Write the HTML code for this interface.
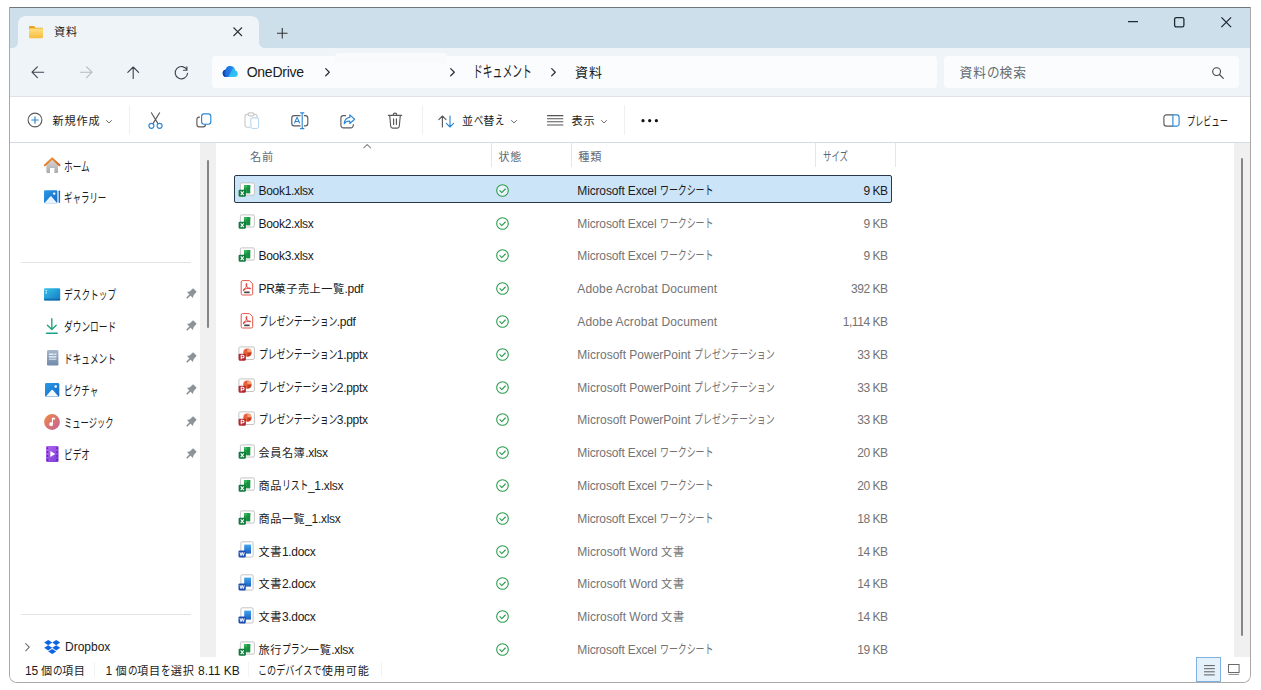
<!DOCTYPE html>
<html lang="ja">
<head>
<meta charset="utf-8">
<title>資料</title>
<style>
*{box-sizing:border-box;margin:0;padding:0}
html,body{width:1261px;height:690px;overflow:hidden;background:#fff}
body{font-family:"Liberation Sans","Noto Sans CJK JP",sans-serif;font-size:12px;color:#1b1b1b;position:relative}
#win{position:absolute;left:9px;top:7px;width:1242px;height:676px;border:1px solid #a9a9a9;border-top-color:#6e7780;border-radius:1px 1px 8px 8px;overflow:hidden;background:#fff}
#win>*{position:absolute}
.b{position:absolute}
.t{position:absolute;white-space:nowrap}
.i{position:absolute;overflow:visible}
.k{display:inline-block;white-space:nowrap;vertical-align:baseline}
.k>span{display:inline-block;transform-origin:0 72%}
#titlebar{left:0;top:0;width:1240px;height:40px;background:#cedfec}
#tab{position:absolute;left:8px;top:8px;width:241px;height:32px;background:#eff4f9;border-radius:8px 8px 0 0}
#tab:before,#tab:after{content:"";position:absolute;bottom:0;width:5px;height:5px}
#tab:before{left:-5px;background:radial-gradient(circle at 0 0,transparent 4.5px,#eff4f9 5px)}
#tab:after{right:-5px;background:radial-gradient(circle at 100% 0,transparent 4.5px,#eff4f9 5px)}
#addr{left:0;top:40px;width:1240px;height:49px;background:#eff4f9;border-bottom:1px solid #dfe3e8}
.field{position:absolute;top:8px;height:32px;background:#fafcfd;border-radius:4px}
#toolbar{left:0;top:89px;width:1240px;height:46px;background:#fff;border-bottom:1px solid #d0dce7}
#side{left:0;top:135px;width:190px;height:514px;background:#fff}
#split{left:190px;top:135px;width:16px;height:514px;background:#f0f0f0}
#split i{position:absolute;left:7px;top:17px;width:2px;height:168px;background:#868686;border-radius:1px}
#vscroll{left:1224px;top:135px;width:16px;height:514px;background:#f0f0f0}
#vscroll i{position:absolute;left:7px;top:15px;width:2px;height:478px;background:#868686;border-radius:1px}
#status{left:0;top:649px;width:1240px;height:26px;background:#fff}
.sel{left:224px;top:167px;width:658px;height:28px;background:#cce4f7;border:1px solid #27394a;border-radius:2px}
.vsep{width:1px;background:#e6e6e6}
.hsep{height:1px;background:#e4e4e4}

</style>
</head>
<body>
<div id="win">
<div id="titlebar"><div id="tab"></div></div>
<div id="addr"><div class="field" style="left:202px;width:724.5px"></div><div class="field" style="left:934px;width:295px"></div></div>
<div id="toolbar"></div>
<div id="side"></div>
<div id="split"><i></i></div>
<div id="vscroll"><i></i></div>
<svg class="i" style="left:18.00px;top:17.00px;" width="16" height="14" viewBox="0 0 16 14">
<defs><linearGradient id="fg" x1="0" y1="0" x2="0" y2="1"><stop offset="0" stop-color="#ffe083"/><stop offset="1" stop-color="#f6bd3c"/></linearGradient></defs>
<path d="M1 2.2C1 1.5 1.5 1 2.2 1H6l1.6 1.8H13.8c.7 0 1.2.5 1.2 1.2V5H1z" fill="#e9a320"/>
<rect x="1" y="3.6" width="14" height="9.6" rx="1.1" fill="url(#fg)"/>
</svg>
<div class="t" style="top:14.30px;font-size:12px;line-height:20px;left:44.00px;color:#1b1b1b;"><span class="j" style="font-size:11.16px;letter-spacing:0.84px">資料</span></div>
<svg class="i" style="left:222.50px;top:19.30px;" width="9.5" height="9.5" viewBox="0 0 9.5 9.5"><path d="M.5.5l8.5 8.5M9 .5L.5 9" stroke="#333" stroke-width="1.1" fill="none"/></svg>
<svg class="i" style="left:266.50px;top:19.50px;" width="10.5" height="10.5" viewBox="0 0 10.5 10.5"><path d="M5.25 0v10.5M0 5.25h10.5" stroke="#333" stroke-width="1.1" fill="none"/></svg>
<svg class="i" style="left:1118.00px;top:13.20px;" width="10" height="1.3" viewBox="0 0 10 1.3"><rect width="10" height="1.250" fill="#1f2a33"/></svg>
<svg class="i" style="left:1164.00px;top:9.00px;" width="10.5" height="10.5" viewBox="0 0 10.5 10.5"><rect x=".6" y=".6" width="9.3" height="9.3" rx="1.6" stroke="#1f2a33" stroke-width="1.300" fill="none"/></svg>
<svg class="i" style="left:1211.00px;top:9.00px;" width="10.5" height="10.5" viewBox="0 0 10.5 10.5"><path d="M.4.4l9.7 9.7M10.1.4L.4 10.1" stroke="#1f2a33" stroke-width="1.300" fill="none"/></svg>
<svg class="i" style="left:21.00px;top:57.50px;" width="13" height="12.5" viewBox="0 0 13 12.5"><path d="M12.6 6.2H1.2M6.4 .8L1 6.2l5.4 5.4" stroke="#3f4650" stroke-width="1.15" fill="none" stroke-linecap="round" stroke-linejoin="round"/></svg>
<svg class="i" style="left:69.50px;top:57.50px;" width="13" height="12.5" viewBox="0 0 13 12.5"><path d="M.4 6.2H11.8M6.6 .8L12 6.2 6.6 11.6" stroke="#b4bac1" stroke-width="1.15" fill="none" stroke-linecap="round" stroke-linejoin="round"/></svg>
<svg class="i" style="left:116.80px;top:57.80px;" width="12.5" height="13" viewBox="0 0 12.5 13"><path d="M6.2 12.4V1.2M.8 6.4L6.2 1l5.4 5.4" stroke="#3f4650" stroke-width="1.15" fill="none" stroke-linecap="round" stroke-linejoin="round"/></svg>
<svg class="i" style="left:165.00px;top:57.50px;" width="13.5" height="13.5" viewBox="0 0 13.5 13.5"><path d="M12.58 7.240A6.200 6.200 0 1 1 12.020 4.080M11.900 .800V4.200H8.500" stroke="#3f4650" stroke-width="1.150" fill="none" stroke-linecap="round" stroke-linejoin="round"/></svg>
<svg class="i" style="left:212.40px;top:57.80px;" width="16.4" height="11.2" viewBox="0 0 16.4 11.2">
<defs><linearGradient id="cg1" x1="0" y1="0" x2="1" y2="0"><stop offset="0" stop-color="#1757cf"/><stop offset="1" stop-color="#2a8ff0"/></linearGradient>
<linearGradient id="cg2" x1="0" y1="0" x2="1" y2="1"><stop offset="0" stop-color="#249cf0"/><stop offset="1" stop-color="#36ccf8"/></linearGradient>
<clipPath id="cc"><path d="M4.200 11.100A3.900 3.900 0 0 1 3.800 3.400 4.900 4.900 0 0 1 13.300 4.600 3.300 3.300 0 0 1 12.900 11.100z"/></clipPath></defs>
<g clip-path="url(#cc)"><rect width="16.400" height="11.200" fill="url(#cg2)"/>
<path d="M-1 -1H12.600L5.800 12H-1z" fill="url(#cg1)"/>
<path d="M4.200 11.100A3.900 3.900 0 0 1 3.800 3.400 6 6 0 0 0 4.200 11.100z" fill="#103ea4"/></g>
</svg>
<div class="t" style="top:53.70px;font-size:14px;line-height:20px;left:236.70px;color:#1b1b1b;letter-spacing:-0.25px;">OneDrive</div>
<svg class="i" style="left:314.50px;top:59.80px;" width="5" height="8.4" viewBox="0 0 5 8.4"><path d="M.7.6l3.6 3.6L.7 7.8" stroke="#30363d" stroke-width="1.3" fill="none" stroke-linecap="round" stroke-linejoin="round"/></svg>
<svg class="i" style="left:439.50px;top:59.80px;" width="5" height="8.4" viewBox="0 0 5 8.4"><path d="M.7.6l3.6 3.6L.7 7.8" stroke="#30363d" stroke-width="1.3" fill="none" stroke-linecap="round" stroke-linejoin="round"/></svg>
<div class="t" style="top:53.70px;font-size:14px;line-height:20px;left:462.70px;color:#1b1b1b;"><span class="k" style="width:58.80px"><span style="transform:scale(0.700,1.15)">ドキュメント</span></span></div>
<svg class="i" style="left:540.50px;top:59.80px;" width="5" height="8.4" viewBox="0 0 5 8.4"><path d="M.7.6l3.6 3.6L.7 7.8" stroke="#30363d" stroke-width="1.3" fill="none" stroke-linecap="round" stroke-linejoin="round"/></svg>
<div class="t" style="top:53.70px;font-size:14px;line-height:20px;left:565.00px;color:#1b1b1b;"><span class="j" style="font-size:13.02px;letter-spacing:0.98px">資料</span></div>
<div class="b" style="left:325px;top:45px;width:112px;height:10px;background:#f8fafc;border-radius:4px 4px 0 0"></div>
<div class="t" style="top:54.60px;font-size:13.7px;line-height:20px;left:949.60px;color:#666b70;"><span class="j" style="font-size:12.74px;letter-spacing:0.96px">資料</span><span class="k" style="width:12.60px"><span style="transform:scale(0.920,1.00)">の</span></span><span class="j" style="font-size:12.74px;letter-spacing:0.96px">検索</span></div>
<svg class="i" style="left:1202.00px;top:58.50px;" width="12" height="12" viewBox="0 0 12 12"><circle cx="4.6" cy="4.6" r="3.9" stroke="#444" stroke-width="1.1" fill="none"/><path d="M7.5 7.5l3.8 3.8" stroke="#444" stroke-width="1.1" stroke-linecap="round"/></svg>
<svg class="i" style="left:17.45px;top:104.20px;" width="16" height="16" viewBox="0 0 16 16"><circle cx="8" cy="8" r="6.900" stroke="#5a5a5a" stroke-width="1.100" fill="none"/><path d="M8 4.800v6.400M4.800 8h6.400" stroke="#2d87d3" stroke-width="1.200" stroke-linecap="round"/></svg>
<div class="t" style="top:103.40px;font-size:12px;line-height:20px;left:42.60px;color:#1b1b1b;"><span class="j" style="font-size:11.16px;letter-spacing:0.84px">新規作成</span></div>
<svg class="i" style="left:96.00px;top:111.50px;" width="6" height="3.4" viewBox="0 0 6 3.4"><path d="M.5.500l2.500 2.400L5.500.500" stroke="#6a6a6a" stroke-width="1" fill="none" stroke-linecap="round" stroke-linejoin="round"/></svg>
<div class="b vsep" style="left:119px;top:97px;height:30px;background:#f0f0f0"></div>
<svg class="i" style="left:138.00px;top:104.00px;" width="15" height="17.5" viewBox="0 0 15 17.5">
<path d="M3.4 .8L10 11.6M11.6 .8L5 11.6" stroke="#5a5a5a" stroke-width="1.15" fill="none" stroke-linecap="round"/>
<circle cx="3.4" cy="13.8" r="2.5" stroke="#2d87d3" stroke-width="1.15" fill="none"/>
<circle cx="11.6" cy="13.8" r="2.5" stroke="#2d87d3" stroke-width="1.15" fill="none"/>
</svg>
<svg class="i" style="left:185.50px;top:105.00px;" width="16" height="15" viewBox="0 0 16 15">
<path d="M3.9 4.1H3.2A2.3 2.3 0 0 0 .9 6.4v5.2a2.3 2.3 0 0 0 2.3 2.3h4a2.3 2.3 0 0 0 2.3-2.3v-.6" stroke="#5a5a5a" stroke-width="1.15" fill="none"/>
<rect x="5.6" y=".9" width="9.2" height="10.3" rx="2.4" stroke="#2d87d3" stroke-width="1.15" fill="none"/>
</svg>
<svg class="i" style="left:233.50px;top:104.00px;" width="16" height="17.5" viewBox="0 0 16 17.5">
<path d="M6.2 15.2H3A2 2 0 0 1 1 13.2V4.4a2 2 0 0 1 2-2h1.2M9.8 2.4H11a2 2 0 0 1 2 2v1.4" stroke="#c9c9c9" stroke-width="1.15" fill="none"/>
<rect x="4.2" y=".8" width="5.6" height="3" rx="1.3" stroke="#c9c9c9" stroke-width="1.15" fill="none"/>
<rect x="6.8" y="5.9" width="7.8" height="10.6" rx="1.9" stroke="#bdd9f0" stroke-width="1.15" fill="none"/>
</svg>
<svg class="i" style="left:280.50px;top:104.00px;" width="18" height="17.5" viewBox="0 0 18 17.5">
<path d="M9.500 3.600H3.200A2.400 2.400 0 0 0 .800 6v5.400a2.400 2.400 0 0 0 2.400 2.400H9.500M12.900 3.600h1.500A2.400 2.400 0 0 1 16.800 6v5.400a2.400 2.400 0 0 1-2.400 2.400H12.900" stroke="#5a5a5a" stroke-width="1.150" fill="none"/>
<path d="M3.400 11.400L5.800 5.600h.5l2.400 5.800M4.300 9.500h3.500" stroke="#2d87d3" stroke-width="1.150" fill="none" stroke-linejoin="round"/>
<path d="M11.200 1v15.400M9.500 .800h3.400M9.500 16.600h3.400" stroke="#2d87d3" stroke-width="1.150" fill="none" stroke-linecap="round"/>
</svg>
<svg class="i" style="left:329.50px;top:105.50px;" width="16.5" height="15" viewBox="0 0 16.5 15">
<path d="M5.600 1.600H3.400A2.500 2.500 0 0 0 .900 4.100v7.200a2.500 2.500 0 0 0 2.500 2.500h7.400a2.500 2.500 0 0 0 2.500-2.500v-.8" stroke="#5a5a5a" stroke-width="1.150" fill="none" stroke-linecap="round"/>
<path d="M9.800 .900l4.800 4.300-4.800 4.300V7.100C7.300 6.900 5.500 7.800 4.200 9.800 4.500 6.100 6.500 3.800 9.800 3.400z" stroke="#2d87d3" stroke-width="1.150" fill="none" stroke-linejoin="round"/>
</svg>
<svg class="i" style="left:376.80px;top:104.20px;" width="16" height="17" viewBox="0 0 16 17">
<path d="M1.300 3.300h13.400M6.200 3.100V2.900a1.800 1.800 0 0 1 3.600 0v.2M2.700 3.500l1 10.800a2 2 0 0 0 2 1.800h4.600a2 2 0 0 0 2-1.800l1-10.800M6.600 6.800v5.600M9.400 6.800v5.600" stroke="#5a5a5a" stroke-width="1.150" fill="none" stroke-linecap="round"/>
</svg>
<div class="b vsep" style="left:412px;top:97px;height:30px;background:#f0f0f0"></div>
<svg class="i" style="left:427.50px;top:106.50px;" width="17" height="13" viewBox="0 0 17 13">
<path d="M4.4 12V1.2M.8 4.6L4.4 1l3.6 3.6" stroke="#5a5a5a" stroke-width="1.15" fill="none" stroke-linecap="round" stroke-linejoin="round"/>
<path d="M12 1v10.8M8.4 8.4L12 12l3.6-3.6" stroke="#2d87d3" stroke-width="1.15" fill="none" stroke-linecap="round" stroke-linejoin="round"/>
</svg>
<div class="t" style="top:103.40px;font-size:12px;line-height:20px;left:452.00px;color:#1b1b1b;"><span class="j" style="font-size:11.16px;letter-spacing:0.84px">並</span><span class="k" style="width:9.36px"><span style="transform:scale(0.780,1.04)">べ</span></span><span class="j" style="font-size:11.16px;letter-spacing:0.84px">替</span><span class="k" style="width:9.36px"><span style="transform:scale(0.780,1.04)">え</span></span></div>
<svg class="i" style="left:501.40px;top:111.50px;" width="6" height="3.4" viewBox="0 0 6 3.4"><path d="M.5.500l2.500 2.400L5.500.500" stroke="#6a6a6a" stroke-width="1" fill="none" stroke-linecap="round" stroke-linejoin="round"/></svg>
<svg class="i" style="left:537.00px;top:107.40px;" width="16.5" height="10.5" viewBox="0 0 16.5 10.5"><path d="M0 .6h16.3M0 3.7h16.3M0 6.8h16.3M0 9.9h16.3" stroke="#555" stroke-width="1.05" fill="none"/></svg>
<div class="t" style="top:103.40px;font-size:12px;line-height:20px;left:561.60px;color:#1b1b1b;"><span class="j" style="font-size:11.16px;letter-spacing:0.84px">表示</span></div>
<svg class="i" style="left:591.30px;top:111.50px;" width="6" height="3.4" viewBox="0 0 6 3.4"><path d="M.5.500l2.500 2.400L5.500.500" stroke="#6a6a6a" stroke-width="1" fill="none" stroke-linecap="round" stroke-linejoin="round"/></svg>
<div class="b vsep" style="left:614px;top:97px;height:30px;background:#f0f0f0"></div>
<svg class="i" style="left:630.50px;top:111.00px;" width="17.5" height="3.4" viewBox="0 0 17.5 3.4"><circle cx="2" cy="1.7" r="1.600" fill="#111"/><circle cx="8.700" cy="1.7" r="1.600" fill="#111"/><circle cx="15.400" cy="1.7" r="1.600" fill="#111"/></svg>
<svg class="i" style="left:1152.50px;top:106.00px;" width="17" height="13" viewBox="0 0 17 13">
<path d="M9.9 .9H3.3A2.4 2.4 0 0 0 .9 3.3v6.4a2.4 2.4 0 0 0 2.4 2.4h6.6" stroke="#5a5a5a" stroke-width="1.15" fill="none"/>
<path d="M9.9 .9h3.8a2.4 2.4 0 0 1 2.4 2.4v6.4a2.4 2.4 0 0 1-2.4 2.4H9.9z" stroke="#2d87d3" stroke-width="1.15" fill="none"/>
</svg>
<div class="t" style="top:103.60px;font-size:12px;line-height:20px;left:1177.00px;color:#1b1b1b;"><span class="k" style="width:40.80px"><span style="transform:scale(0.680,1.04)">プレビュー</span></span></div>
<svg class="i" style="left:34.00px;top:149.00px;" width="16.5" height="17" viewBox="0 0 16.5 17">
<defs><linearGradient id="hg" x1="0" y1="0" x2="0" y2="1"><stop offset="0" stop-color="#d9d9d9"/><stop offset="1" stop-color="#a9a9a9"/></linearGradient>
<linearGradient id="ho" x1="0" y1="0" x2="1" y2="1"><stop offset="0" stop-color="#f59a3c"/><stop offset="1" stop-color="#d9601a"/></linearGradient></defs>
<path d="M2.4 7.6L8.2 2.4 14 7.6V15a1 1 0 0 1-1 1H10.4V11H6v5H3.4a1 1 0 0 1-1-1z" fill="url(#hg)"/>
<path d="M.9 8.2L8.2 1.4l7.3 6.8" stroke="url(#ho)" stroke-width="2" fill="none" stroke-linecap="round" stroke-linejoin="round"/>
</svg>
<div class="t" style="top:149.30px;font-size:12px;line-height:20px;left:54.00px;color:#1b1b1b;"><span class="k" style="width:25.92px"><span style="transform:scale(0.720,1.05)">ホーム</span></span></div>
<svg class="i" style="left:34.00px;top:181.50px;" width="16.5" height="13.5" viewBox="0 0 16.5 13.5">
<defs><linearGradient id="gg" x1="0" y1="0" x2="1" y2="1"><stop offset="0" stop-color="#2b9ae6"/><stop offset="1" stop-color="#1569c7"/></linearGradient></defs>
<rect x="0" y=".2" width="13.4" height="13" rx="1.2" fill="url(#gg)"/>
<path d="M.4 13.2L6.2 6.6a.9.9 0 0 1 1.3 0l5.7 6.6z" fill="#e8f3fc"/>
<circle cx="10.2" cy="3.6" r="1.2" fill="#fff"/>
<rect x="14.6" y=".6" width="1.5" height="12.4" rx=".7" fill="#1a6fc9"/>
</svg>
<div class="t" style="top:180.10px;font-size:12px;line-height:20px;left:54.00px;color:#1b1b1b;"><span class="k" style="width:42.30px"><span style="transform:scale(0.705,1.05)">ギャラリー</span></span></div>
<div class="b hsep" style="left:11px;top:254px;width:170px"></div>
<svg class="i" style="left:34.00px;top:279.50px;" width="16.5" height="12.8" viewBox="0 0 16.5 12.8">
<defs><linearGradient id="dg" x1="0" y1="0" x2="1" y2="1"><stop offset="0" stop-color="#35c3ea"/><stop offset="1" stop-color="#1378c2"/></linearGradient></defs>
<rect x="0" y=".2" width="16.2" height="12.3" rx="1.2" fill="url(#dg)"/>
<rect x="0" y="10.8" width="16.2" height="1.7" rx=".8" fill="#0f62a6" opacity=".75"/>
<rect x="1.6" y="1.9" width="1.3" height="1.3" fill="#e8f8ff"/><rect x="1.6" y="4.2" width="1.3" height="1.3" fill="#e8f8ff"/>
</svg>
<div class="t" style="top:276.60px;font-size:12px;line-height:20px;left:54.00px;color:#1b1b1b;"><span class="k" style="width:52.20px"><span style="transform:scale(0.725,1.05)">デスクトップ</span></span></div>
<svg class="i" style="left:175.50px;top:280.00px;" width="11" height="11" viewBox="0 0 11 11"><g transform="translate(4.700 6.200) rotate(45)"><path d="M-2.600-5.100a.9.9 0 0 1 .9-.9h3.400a.9.9 0 0 1 .9.9V-1.600L4.100 1.100H-4.100L-2.600-1.600z" fill="#8b949b"/><path d="M0 1V5" stroke="#8b949b" stroke-width="1.700" stroke-linecap="round"/></g></svg>
<svg class="i" style="left:36.30px;top:310.00px;" width="12" height="16.2" viewBox="0 0 12 16.2"><path d="M5.8 .8v10.6M1.400 7.200l4.400 4.400 4.400-4.400" stroke="#23a67c" stroke-width="1.4" fill="none" stroke-linecap="round" stroke-linejoin="round"/><path d="M.6 15.2h10.600" stroke="#1d9f86" stroke-width="1.5" stroke-linecap="round"/></svg>
<div class="t" style="top:308.60px;font-size:12px;line-height:20px;left:54.00px;color:#1b1b1b;"><span class="k" style="width:52.20px"><span style="transform:scale(0.725,1.05)">ダウンロード</span></span></div>
<svg class="i" style="left:175.50px;top:312.00px;" width="11" height="11" viewBox="0 0 11 11"><g transform="translate(4.700 6.200) rotate(45)"><path d="M-2.600-5.100a.9.9 0 0 1 .9-.9h3.400a.9.9 0 0 1 .9.9V-1.600L4.100 1.100H-4.100L-2.600-1.600z" fill="#8b949b"/><path d="M0 1V5" stroke="#8b949b" stroke-width="1.700" stroke-linecap="round"/></g></svg>
<svg class="i" style="left:36.50px;top:342.00px;" width="11.6" height="15.8" viewBox="0 0 11.6 15.8">
<defs><linearGradient id="og" x1="0" y1="0" x2="0" y2="1"><stop offset="0" stop-color="#a9bacd"/><stop offset="1" stop-color="#6f89a9"/></linearGradient></defs>
<rect x="0" y="0" width="11.4" height="15.600" rx="1.300" fill="url(#og)"/>
<rect x="2" y="3.600" width="4.600" height="1.300" fill="#f3f7fb"/><rect x="7.400" y="3.600" width="2" height="1.300" fill="#f3f7fb"/><rect x="2" y="6.200" width="7.400" height="1.300" fill="#f3f7fb"/><rect x="2" y="8.700" width="7.400" height="1" fill="#dfe8f1"/>
</svg>
<div class="t" style="top:340.60px;font-size:12px;line-height:20px;left:54.00px;color:#1b1b1b;"><span class="k" style="width:51.84px"><span style="transform:scale(0.720,1.05)">ドキュメント</span></span></div>
<svg class="i" style="left:175.50px;top:344.00px;" width="11" height="11" viewBox="0 0 11 11"><g transform="translate(4.700 6.200) rotate(45)"><path d="M-2.600-5.100a.9.9 0 0 1 .9-.9h3.400a.9.9 0 0 1 .9.9V-1.600L4.100 1.100H-4.100L-2.600-1.600z" fill="#8b949b"/><path d="M0 1V5" stroke="#8b949b" stroke-width="1.700" stroke-linecap="round"/></g></svg>
<svg class="i" style="left:35.00px;top:375.00px;" width="14.5" height="14" viewBox="0 0 14.5 14">
<rect x="0" y="0" width="14.300" height="13.800" rx="1.400" fill="url(#gg)"/>
<path d="M.8 13.400L6.500 7a.9.9 0 0 1 1.300 0l5.700 6.400z" fill="#f2f8fd"/>
<circle cx="10.700" cy="3.500" r="1.250" fill="#fff"/>
</svg>
<div class="t" style="top:372.60px;font-size:12px;line-height:20px;left:54.00px;color:#1b1b1b;"><span class="k" style="width:34.56px"><span style="transform:scale(0.720,1.05)">ピクチャ</span></span></div>
<svg class="i" style="left:175.50px;top:376.00px;" width="11" height="11" viewBox="0 0 11 11"><g transform="translate(4.700 6.200) rotate(45)"><path d="M-2.600-5.100a.9.9 0 0 1 .9-.9h3.400a.9.9 0 0 1 .9.9V-1.600L4.100 1.100H-4.100L-2.600-1.600z" fill="#8b949b"/><path d="M0 1V5" stroke="#8b949b" stroke-width="1.700" stroke-linecap="round"/></g></svg>
<svg class="i" style="left:34.00px;top:406.00px;" width="16" height="16" viewBox="0 0 16 16">
<defs><linearGradient id="mg" x1="0" y1="0" x2="1" y2="1"><stop offset="0" stop-color="#ee8a45"/><stop offset="1" stop-color="#c5609b"/></linearGradient></defs>
<circle cx="8" cy="8" r="7.900" fill="url(#mg)"/>
<path d="M7.900 3.700h3.200v1.900H9v4.600a1.900 1.900 0 1 1-1.100-1.700z" fill="#fff"/>
</svg>
<div class="t" style="top:404.60px;font-size:12px;line-height:20px;left:54.00px;color:#1b1b1b;"><span class="k" style="width:49.68px"><span style="transform:scale(0.690,1.05)">ミュージック</span></span></div>
<svg class="i" style="left:175.50px;top:408.00px;" width="11" height="11" viewBox="0 0 11 11"><g transform="translate(4.700 6.200) rotate(45)"><path d="M-2.600-5.100a.9.9 0 0 1 .9-.9h3.400a.9.9 0 0 1 .9.9V-1.600L4.100 1.100H-4.100L-2.600-1.600z" fill="#8b949b"/><path d="M0 1V5" stroke="#8b949b" stroke-width="1.700" stroke-linecap="round"/></g></svg>
<svg class="i" style="left:36.00px;top:438.00px;" width="12.8" height="16.2" viewBox="0 0 12.8 16.2">
<defs><linearGradient id="vg" x1="0" y1="0" x2="1" y2="1"><stop offset="0" stop-color="#b567f0"/><stop offset="1" stop-color="#7a3ad6"/></linearGradient></defs>
<rect x="0" y="0" width="12.600" height="16" rx="1.300" fill="url(#vg)"/>
<path d="M4.300 4.900v6.200l5-3.100z" fill="#fff"/>
<g fill="#4b1fa0"><rect x=".9" y="1.400" width="1.300" height="1.500"/><rect x=".9" y="5.300" width="1.300" height="1.500"/><rect x=".9" y="9.200" width="1.300" height="1.500"/><rect x=".9" y="13.100" width="1.300" height="1.500"/>
<rect x="10.400" y="1.400" width="1.300" height="1.500"/><rect x="10.400" y="5.300" width="1.300" height="1.500"/><rect x="10.400" y="9.200" width="1.300" height="1.500"/><rect x="10.400" y="13.100" width="1.300" height="1.500"/></g>
</svg>
<div class="t" style="top:436.60px;font-size:12px;line-height:20px;left:54.00px;color:#1b1b1b;"><span class="k" style="width:25.92px"><span style="transform:scale(0.720,1.05)">ビデオ</span></span></div>
<svg class="i" style="left:175.50px;top:440.00px;" width="11" height="11" viewBox="0 0 11 11"><g transform="translate(4.700 6.200) rotate(45)"><path d="M-2.600-5.100a.9.9 0 0 1 .9-.9h3.400a.9.9 0 0 1 .9.9V-1.600L4.100 1.100H-4.100L-2.600-1.600z" fill="#8b949b"/><path d="M0 1V5" stroke="#8b949b" stroke-width="1.700" stroke-linecap="round"/></g></svg>
<div class="b hsep" style="left:11px;top:606px;width:170px"></div>
<svg class="i" style="left:15.00px;top:635.10px;" width="5" height="8.4" viewBox="0 0 5 8.4"><path d="M.7.6l3.6 3.6L.7 7.8" stroke="#6e6e6e" stroke-width="1.1" fill="none" stroke-linecap="round" stroke-linejoin="round"/></svg>
<svg class="i" style="left:34.00px;top:631.50px;" width="16.5" height="14.5" viewBox="0 0 16.5 14.5">
<g fill="#0d63e6"><path d="M4.200 0L8.200 2.600 4.200 5.200.2 2.600z"/><path d="M12.200 0l4 2.600-4 2.600-4-2.600z"/><path d="M4.200 5.200l4 2.600-4 2.600-4-2.600z"/><path d="M12.200 5.200l4 2.600-4 2.600-4-2.600z"/><path d="M8.200 8.900l4 2.600-4 2.600-4-2.600z"/></g>
</svg>
<div class="t" style="top:629.00px;font-size:12px;line-height:20px;left:55.00px;color:#1b1b1b;">Dropbox</div>
<div class="t" style="top:138.50px;font-size:12px;line-height:20px;left:240.00px;color:#5c6a78;"><span class="j" style="font-size:11.16px;letter-spacing:0.84px">名前</span></div>
<div class="t" style="top:138.50px;font-size:12px;line-height:20px;left:488.20px;color:#5c6a78;"><span class="j" style="font-size:11.16px;letter-spacing:0.84px">状態</span></div>
<div class="t" style="top:138.50px;font-size:12px;line-height:20px;left:568.30px;color:#5c6a78;"><span class="j" style="font-size:11.16px;letter-spacing:0.84px">種類</span></div>
<div class="t" style="top:138.50px;font-size:12px;line-height:20px;left:812.50px;color:#5c6a78;"><span class="k" style="width:25.20px"><span style="transform:scale(0.700,1.04)">サイズ</span></span></div>
<svg class="i" style="left:353.40px;top:135.50px;" width="8.4" height="4.6" viewBox="0 0 8.4 4.6"><path d="M.5 4.100L4.200.500 7.900 4.100" stroke="#8a8a8a" stroke-width="1.100" fill="none"/></svg>
<div class="b vsep" style="left:481px;top:135px;height:24px"></div>
<div class="b vsep" style="left:561px;top:135px;height:24px"></div>
<div class="b vsep" style="left:805px;top:135px;height:24px"></div>
<div class="b vsep" style="left:885px;top:135px;height:24px"></div>
<div class="b sel"></div>
<svg class="i" style="left:228.00px;top:173.50px;" width="16.5" height="16" viewBox="0 0 16.5 16">
<rect x="2.400" y=".900" width="14" height="12.200" rx="1.300" fill="#fff" stroke="#bdbdbd" stroke-width=".9"/>
<rect x="6" y="3" width="6.200" height="8.300" fill="#1e9b47"/><rect x="6" y="3" width="6.200" height="2.600" fill="#37b45c"/><rect x="9.100" y="3" width="3.100" height="8.300" fill="#12833a" opacity=".55"/>
<rect x=".6" y="7.700" width="7.300" height="7" rx="1.100" fill="#127a3c"/>
<path d="M2.700 9.400l3.100 3.700M5.800 9.400l-3.100 3.700" stroke="#fff" stroke-width="1.100"/>
</svg>
<div class="t" style="top:172.70px;font-size:12px;line-height:20px;left:248.60px;color:#1b1b1b;letter-spacing:-0.33px;">Book1.xlsx</div>
<svg class="i" style="left:486.40px;top:175.70px;" width="13" height="13" viewBox="0 0 13 13"><circle cx="6.500" cy="6.500" r="5.800" stroke="#2a9d4e" stroke-width="1.100" fill="#fff" fill-opacity=".6"/><path d="M3.900 6.700l1.900 1.900 3.500-3.600" stroke="#2a9d4e" stroke-width="1.100" fill="none" stroke-linecap="round" stroke-linejoin="round"/></svg>
<div class="t" style="top:172.70px;font-size:12px;line-height:20px;left:567.30px;color:#1b1b1b;letter-spacing:-0.15px;">Microsoft Excel <span class="k" style="width:53.32px"><span style="transform:scale(0.750,1.04)">ワークシート</span></span></div>
<div class="t" style="top:172.70px;font-size:12px;line-height:20px;right:362.40px;color:#1b1b1b;letter-spacing:-0.45px;">9 KB</div>
<svg class="i" style="left:228.00px;top:206.31px;" width="16.5" height="16" viewBox="0 0 16.5 16">
<rect x="2.400" y=".900" width="14" height="12.200" rx="1.300" fill="#fff" stroke="#bdbdbd" stroke-width=".9"/>
<rect x="6" y="3" width="6.200" height="8.300" fill="#1e9b47"/><rect x="6" y="3" width="6.200" height="2.600" fill="#37b45c"/><rect x="9.100" y="3" width="3.100" height="8.300" fill="#12833a" opacity=".55"/>
<rect x=".6" y="7.700" width="7.300" height="7" rx="1.100" fill="#127a3c"/>
<path d="M2.700 9.400l3.100 3.700M5.800 9.400l-3.100 3.700" stroke="#fff" stroke-width="1.100"/>
</svg>
<div class="t" style="top:205.51px;font-size:12px;line-height:20px;left:248.60px;color:#1b1b1b;letter-spacing:-0.33px;">Book2.xlsx</div>
<svg class="i" style="left:486.40px;top:208.51px;" width="13" height="13" viewBox="0 0 13 13"><circle cx="6.500" cy="6.500" r="5.800" stroke="#2a9d4e" stroke-width="1.100" fill="#fff" fill-opacity=".6"/><path d="M3.900 6.700l1.900 1.900 3.500-3.600" stroke="#2a9d4e" stroke-width="1.100" fill="none" stroke-linecap="round" stroke-linejoin="round"/></svg>
<div class="t" style="top:205.51px;font-size:12px;line-height:20px;left:567.30px;color:#737373;letter-spacing:-0.15px;">Microsoft Excel <span class="k" style="width:53.32px"><span style="transform:scale(0.750,1.04)">ワークシート</span></span></div>
<div class="t" style="top:205.51px;font-size:12px;line-height:20px;right:362.40px;color:#737373;letter-spacing:-0.45px;">9 KB</div>
<svg class="i" style="left:228.00px;top:239.12px;" width="16.5" height="16" viewBox="0 0 16.5 16">
<rect x="2.400" y=".900" width="14" height="12.200" rx="1.300" fill="#fff" stroke="#bdbdbd" stroke-width=".9"/>
<rect x="6" y="3" width="6.200" height="8.300" fill="#1e9b47"/><rect x="6" y="3" width="6.200" height="2.600" fill="#37b45c"/><rect x="9.100" y="3" width="3.100" height="8.300" fill="#12833a" opacity=".55"/>
<rect x=".6" y="7.700" width="7.300" height="7" rx="1.100" fill="#127a3c"/>
<path d="M2.700 9.400l3.100 3.700M5.800 9.400l-3.100 3.700" stroke="#fff" stroke-width="1.100"/>
</svg>
<div class="t" style="top:238.32px;font-size:12px;line-height:20px;left:248.60px;color:#1b1b1b;letter-spacing:-0.33px;">Book3.xlsx</div>
<svg class="i" style="left:486.40px;top:241.32px;" width="13" height="13" viewBox="0 0 13 13"><circle cx="6.500" cy="6.500" r="5.800" stroke="#2a9d4e" stroke-width="1.100" fill="#fff" fill-opacity=".6"/><path d="M3.900 6.700l1.900 1.900 3.500-3.600" stroke="#2a9d4e" stroke-width="1.100" fill="none" stroke-linecap="round" stroke-linejoin="round"/></svg>
<div class="t" style="top:238.32px;font-size:12px;line-height:20px;left:567.30px;color:#737373;letter-spacing:-0.15px;">Microsoft Excel <span class="k" style="width:53.32px"><span style="transform:scale(0.750,1.04)">ワークシート</span></span></div>
<div class="t" style="top:238.32px;font-size:12px;line-height:20px;right:362.40px;color:#737373;letter-spacing:-0.45px;">9 KB</div>
<svg class="i" style="left:228.60px;top:271.93px;" width="16.5" height="16" viewBox="0 0 16.5 16">
<path d="M3.600.600h6.900l3.200 3.200v9.800a1.400 1.400 0 0 1-1.400 1.400H3.600a1.400 1.400 0 0 1-1.400-1.400V2A1.400 1.400 0 0 1 3.600.600z" fill="#fff" stroke="#e2574c" stroke-width="1"/>
<path d="M4.600 9.300c1.700-.6 3.100-2.600 3.300-5.200.1-.9-.9-.9-.9 0 .1 2.300 1.900 4.300 4 4.700.9.200.9-.7 0-.7-2.300 0-4.800.7-6.300 1.900-.6.500-.2 1 .3.600z" stroke="#e0342b" stroke-width=".95" fill="none" stroke-linejoin="round"/>
<rect x="5.200" y="11.500" width="5.400" height="1.700" fill="#444"/>
</svg>
<div class="t" style="top:271.13px;font-size:12px;line-height:20px;left:248.60px;color:#1b1b1b;letter-spacing:-0.33px;">PR<span class="j" style="font-size:11.16px;letter-spacing:0.51px">菓子売上一覧</span>.pdf</div>
<svg class="i" style="left:486.40px;top:274.13px;" width="13" height="13" viewBox="0 0 13 13"><circle cx="6.500" cy="6.500" r="5.800" stroke="#2a9d4e" stroke-width="1.100" fill="#fff" fill-opacity=".6"/><path d="M3.900 6.700l1.900 1.900 3.500-3.600" stroke="#2a9d4e" stroke-width="1.100" fill="none" stroke-linecap="round" stroke-linejoin="round"/></svg>
<div class="t" style="top:271.13px;font-size:12px;line-height:20px;left:567.30px;color:#737373;letter-spacing:0.15px;">Adobe Acrobat Document</div>
<div class="t" style="top:271.13px;font-size:12px;line-height:20px;right:362.40px;color:#737373;letter-spacing:-0.45px;">392 KB</div>
<svg class="i" style="left:228.60px;top:304.74px;" width="16.5" height="16" viewBox="0 0 16.5 16">
<path d="M3.600.600h6.900l3.200 3.200v9.800a1.400 1.400 0 0 1-1.400 1.400H3.600a1.400 1.400 0 0 1-1.400-1.400V2A1.400 1.400 0 0 1 3.600.600z" fill="#fff" stroke="#e2574c" stroke-width="1"/>
<path d="M4.600 9.300c1.700-.6 3.100-2.600 3.300-5.200.1-.9-.9-.9-.9 0 .1 2.300 1.900 4.300 4 4.700.9.200.9-.7 0-.7-2.300 0-4.800.7-6.300 1.900-.6.500-.2 1 .3.600z" stroke="#e0342b" stroke-width=".95" fill="none" stroke-linejoin="round"/>
<rect x="5.200" y="11.500" width="5.400" height="1.700" fill="#444"/>
</svg>
<div class="t" style="top:303.94px;font-size:12px;line-height:20px;left:248.60px;color:#1b1b1b;letter-spacing:-0.33px;"><span class="k" style="width:78.25px"><span style="transform:scale(0.745,1.04)">プレゼンテーション</span></span>.pdf</div>
<svg class="i" style="left:486.40px;top:306.94px;" width="13" height="13" viewBox="0 0 13 13"><circle cx="6.500" cy="6.500" r="5.800" stroke="#2a9d4e" stroke-width="1.100" fill="#fff" fill-opacity=".6"/><path d="M3.900 6.700l1.900 1.900 3.500-3.600" stroke="#2a9d4e" stroke-width="1.100" fill="none" stroke-linecap="round" stroke-linejoin="round"/></svg>
<div class="t" style="top:303.94px;font-size:12px;line-height:20px;left:567.30px;color:#737373;letter-spacing:0.15px;">Adobe Acrobat Document</div>
<div class="t" style="top:303.94px;font-size:12px;line-height:20px;right:362.40px;color:#737373;letter-spacing:-0.45px;">1,114 KB</div>
<svg class="i" style="left:228.00px;top:337.55px;" width="16.5" height="16" viewBox="0 0 16.5 16">
<rect x=".900" y=".900" width="15.500" height="12.600" rx="1.300" fill="#fff" stroke="#bdbdbd" stroke-width=".9"/>
<circle cx="9.400" cy="6.600" r="4.100" fill="#e8603a"/><path d="M9.400 6.600V2.500a4.100 4.100 0 0 1 4.100 4.100z" fill="#f6a07c"/><path d="M9.400 6.600h4.100a4.100 4.100 0 0 1-4.100 4.100z" fill="#c13b1c"/>
<rect x=".6" y="7.700" width="7.300" height="7" rx="1.100" fill="#b7282e"/>
<path d="M3.200 13.300V9.300h1.600a1.250 1.250 0 0 1 0 2.500H3.200" stroke="#fff" stroke-width="1.050" fill="none"/>
</svg>
<div class="t" style="top:336.75px;font-size:12px;line-height:20px;left:248.60px;color:#1b1b1b;letter-spacing:-0.33px;"><span class="k" style="width:78.25px"><span style="transform:scale(0.745,1.04)">プレゼンテーション</span></span>1.pptx</div>
<svg class="i" style="left:486.40px;top:339.75px;" width="13" height="13" viewBox="0 0 13 13"><circle cx="6.500" cy="6.500" r="5.800" stroke="#2a9d4e" stroke-width="1.100" fill="#fff" fill-opacity=".6"/><path d="M3.900 6.700l1.900 1.900 3.500-3.600" stroke="#2a9d4e" stroke-width="1.100" fill="none" stroke-linecap="round" stroke-linejoin="round"/></svg>
<div class="t" style="top:336.75px;font-size:12px;line-height:20px;left:567.30px;color:#737373;">Microsoft PowerPoint <span class="k" style="width:81.00px"><span style="transform:scale(0.750,1.04)">プレゼンテーション</span></span></div>
<div class="t" style="top:336.75px;font-size:12px;line-height:20px;right:362.40px;color:#737373;letter-spacing:-0.45px;">33 KB</div>
<svg class="i" style="left:228.00px;top:370.36px;" width="16.5" height="16" viewBox="0 0 16.5 16">
<rect x=".900" y=".900" width="15.500" height="12.600" rx="1.300" fill="#fff" stroke="#bdbdbd" stroke-width=".9"/>
<circle cx="9.400" cy="6.600" r="4.100" fill="#e8603a"/><path d="M9.400 6.600V2.500a4.100 4.100 0 0 1 4.100 4.100z" fill="#f6a07c"/><path d="M9.400 6.600h4.100a4.100 4.100 0 0 1-4.100 4.100z" fill="#c13b1c"/>
<rect x=".6" y="7.700" width="7.300" height="7" rx="1.100" fill="#b7282e"/>
<path d="M3.200 13.300V9.300h1.600a1.250 1.250 0 0 1 0 2.500H3.200" stroke="#fff" stroke-width="1.050" fill="none"/>
</svg>
<div class="t" style="top:369.56px;font-size:12px;line-height:20px;left:248.60px;color:#1b1b1b;letter-spacing:-0.33px;"><span class="k" style="width:78.25px"><span style="transform:scale(0.745,1.04)">プレゼンテーション</span></span>2.pptx</div>
<svg class="i" style="left:486.40px;top:372.56px;" width="13" height="13" viewBox="0 0 13 13"><circle cx="6.500" cy="6.500" r="5.800" stroke="#2a9d4e" stroke-width="1.100" fill="#fff" fill-opacity=".6"/><path d="M3.900 6.700l1.900 1.900 3.500-3.600" stroke="#2a9d4e" stroke-width="1.100" fill="none" stroke-linecap="round" stroke-linejoin="round"/></svg>
<div class="t" style="top:369.56px;font-size:12px;line-height:20px;left:567.30px;color:#737373;">Microsoft PowerPoint <span class="k" style="width:81.00px"><span style="transform:scale(0.750,1.04)">プレゼンテーション</span></span></div>
<div class="t" style="top:369.56px;font-size:12px;line-height:20px;right:362.40px;color:#737373;letter-spacing:-0.45px;">33 KB</div>
<svg class="i" style="left:228.00px;top:403.17px;" width="16.5" height="16" viewBox="0 0 16.5 16">
<rect x=".900" y=".900" width="15.500" height="12.600" rx="1.300" fill="#fff" stroke="#bdbdbd" stroke-width=".9"/>
<circle cx="9.400" cy="6.600" r="4.100" fill="#e8603a"/><path d="M9.400 6.600V2.500a4.100 4.100 0 0 1 4.100 4.100z" fill="#f6a07c"/><path d="M9.400 6.600h4.100a4.100 4.100 0 0 1-4.100 4.100z" fill="#c13b1c"/>
<rect x=".6" y="7.700" width="7.300" height="7" rx="1.100" fill="#b7282e"/>
<path d="M3.200 13.300V9.300h1.600a1.250 1.250 0 0 1 0 2.500H3.200" stroke="#fff" stroke-width="1.050" fill="none"/>
</svg>
<div class="t" style="top:402.37px;font-size:12px;line-height:20px;left:248.60px;color:#1b1b1b;letter-spacing:-0.33px;"><span class="k" style="width:78.25px"><span style="transform:scale(0.745,1.04)">プレゼンテーション</span></span>3.pptx</div>
<svg class="i" style="left:486.40px;top:405.37px;" width="13" height="13" viewBox="0 0 13 13"><circle cx="6.500" cy="6.500" r="5.800" stroke="#2a9d4e" stroke-width="1.100" fill="#fff" fill-opacity=".6"/><path d="M3.900 6.700l1.900 1.900 3.500-3.600" stroke="#2a9d4e" stroke-width="1.100" fill="none" stroke-linecap="round" stroke-linejoin="round"/></svg>
<div class="t" style="top:402.37px;font-size:12px;line-height:20px;left:567.30px;color:#737373;">Microsoft PowerPoint <span class="k" style="width:81.00px"><span style="transform:scale(0.750,1.04)">プレゼンテーション</span></span></div>
<div class="t" style="top:402.37px;font-size:12px;line-height:20px;right:362.40px;color:#737373;letter-spacing:-0.45px;">33 KB</div>
<svg class="i" style="left:228.00px;top:435.98px;" width="16.5" height="16" viewBox="0 0 16.5 16">
<rect x="2.400" y=".900" width="14" height="12.200" rx="1.300" fill="#fff" stroke="#bdbdbd" stroke-width=".9"/>
<rect x="6" y="3" width="6.200" height="8.300" fill="#1e9b47"/><rect x="6" y="3" width="6.200" height="2.600" fill="#37b45c"/><rect x="9.100" y="3" width="3.100" height="8.300" fill="#12833a" opacity=".55"/>
<rect x=".6" y="7.700" width="7.300" height="7" rx="1.100" fill="#127a3c"/>
<path d="M2.700 9.400l3.100 3.700M5.800 9.400l-3.100 3.700" stroke="#fff" stroke-width="1.100"/>
</svg>
<div class="t" style="top:435.18px;font-size:12px;line-height:20px;left:248.60px;color:#1b1b1b;letter-spacing:-0.33px;"><span class="j" style="font-size:11.16px;letter-spacing:0.51px">会員名簿</span>.xlsx</div>
<svg class="i" style="left:486.40px;top:438.18px;" width="13" height="13" viewBox="0 0 13 13"><circle cx="6.500" cy="6.500" r="5.800" stroke="#2a9d4e" stroke-width="1.100" fill="#fff" fill-opacity=".6"/><path d="M3.900 6.700l1.900 1.900 3.500-3.600" stroke="#2a9d4e" stroke-width="1.100" fill="none" stroke-linecap="round" stroke-linejoin="round"/></svg>
<div class="t" style="top:435.18px;font-size:12px;line-height:20px;left:567.30px;color:#737373;letter-spacing:-0.15px;">Microsoft Excel <span class="k" style="width:53.32px"><span style="transform:scale(0.750,1.04)">ワークシート</span></span></div>
<div class="t" style="top:435.18px;font-size:12px;line-height:20px;right:362.40px;color:#737373;letter-spacing:-0.45px;">20 KB</div>
<svg class="i" style="left:228.00px;top:468.79px;" width="16.5" height="16" viewBox="0 0 16.5 16">
<rect x="2.400" y=".900" width="14" height="12.200" rx="1.300" fill="#fff" stroke="#bdbdbd" stroke-width=".9"/>
<rect x="6" y="3" width="6.200" height="8.300" fill="#1e9b47"/><rect x="6" y="3" width="6.200" height="2.600" fill="#37b45c"/><rect x="9.100" y="3" width="3.100" height="8.300" fill="#12833a" opacity=".55"/>
<rect x=".6" y="7.700" width="7.300" height="7" rx="1.100" fill="#127a3c"/>
<path d="M2.700 9.400l3.100 3.700M5.800 9.400l-3.100 3.700" stroke="#fff" stroke-width="1.100"/>
</svg>
<div class="t" style="top:467.99px;font-size:12px;line-height:20px;left:248.60px;color:#1b1b1b;letter-spacing:-0.33px;"><span class="j" style="font-size:11.16px;letter-spacing:0.51px">商品</span><span class="k" style="width:26.08px"><span style="transform:scale(0.745,1.04)">リスト</span></span>_1.xlsx</div>
<svg class="i" style="left:486.40px;top:470.99px;" width="13" height="13" viewBox="0 0 13 13"><circle cx="6.500" cy="6.500" r="5.800" stroke="#2a9d4e" stroke-width="1.100" fill="#fff" fill-opacity=".6"/><path d="M3.900 6.700l1.900 1.900 3.500-3.600" stroke="#2a9d4e" stroke-width="1.100" fill="none" stroke-linecap="round" stroke-linejoin="round"/></svg>
<div class="t" style="top:467.99px;font-size:12px;line-height:20px;left:567.30px;color:#737373;letter-spacing:-0.15px;">Microsoft Excel <span class="k" style="width:53.32px"><span style="transform:scale(0.750,1.04)">ワークシート</span></span></div>
<div class="t" style="top:467.99px;font-size:12px;line-height:20px;right:362.40px;color:#737373;letter-spacing:-0.45px;">20 KB</div>
<svg class="i" style="left:228.00px;top:501.60px;" width="16.5" height="16" viewBox="0 0 16.5 16">
<rect x="2.400" y=".900" width="14" height="12.200" rx="1.300" fill="#fff" stroke="#bdbdbd" stroke-width=".9"/>
<rect x="6" y="3" width="6.200" height="8.300" fill="#1e9b47"/><rect x="6" y="3" width="6.200" height="2.600" fill="#37b45c"/><rect x="9.100" y="3" width="3.100" height="8.300" fill="#12833a" opacity=".55"/>
<rect x=".6" y="7.700" width="7.300" height="7" rx="1.100" fill="#127a3c"/>
<path d="M2.700 9.400l3.100 3.700M5.800 9.400l-3.100 3.700" stroke="#fff" stroke-width="1.100"/>
</svg>
<div class="t" style="top:500.80px;font-size:12px;line-height:20px;left:248.60px;color:#1b1b1b;letter-spacing:-0.33px;"><span class="j" style="font-size:11.16px;letter-spacing:0.51px">商品一覧</span>_1.xlsx</div>
<svg class="i" style="left:486.40px;top:503.80px;" width="13" height="13" viewBox="0 0 13 13"><circle cx="6.500" cy="6.500" r="5.800" stroke="#2a9d4e" stroke-width="1.100" fill="#fff" fill-opacity=".6"/><path d="M3.900 6.700l1.900 1.900 3.500-3.600" stroke="#2a9d4e" stroke-width="1.100" fill="none" stroke-linecap="round" stroke-linejoin="round"/></svg>
<div class="t" style="top:500.80px;font-size:12px;line-height:20px;left:567.30px;color:#737373;letter-spacing:-0.15px;">Microsoft Excel <span class="k" style="width:53.32px"><span style="transform:scale(0.750,1.04)">ワークシート</span></span></div>
<div class="t" style="top:500.80px;font-size:12px;line-height:20px;right:362.40px;color:#737373;letter-spacing:-0.45px;">18 KB</div>
<svg class="i" style="left:228.00px;top:534.41px;" width="16.5" height="16" viewBox="0 0 16.5 16">
<rect x="2.900" y="-.200" width="12.200" height="15.300" rx="1.300" fill="#fff" stroke="#bdbdbd" stroke-width=".9"/>
<defs><linearGradient id="wg" x1="0" y1="0" x2="0" y2="1"><stop offset="0" stop-color="#41a5ee"/><stop offset="1" stop-color="#1a5fc0"/></linearGradient></defs>
<rect x="6.200" y="2.600" width="6.800" height="9" fill="url(#wg)"/>
<rect x=".5" y="8.400" width="7.300" height="7" rx="1.100" fill="#1d4fb3"/>
<path d="M2 10.300l1 3.300 1.150-3.300 1.150 3.300 1-3.300" stroke="#fff" stroke-width=".95" fill="none" stroke-linejoin="round"/>
</svg>
<div class="t" style="top:533.61px;font-size:12px;line-height:20px;left:248.60px;color:#1b1b1b;letter-spacing:-0.33px;"><span class="j" style="font-size:11.16px;letter-spacing:0.51px">文書</span>1.docx</div>
<svg class="i" style="left:486.40px;top:536.61px;" width="13" height="13" viewBox="0 0 13 13"><circle cx="6.500" cy="6.500" r="5.800" stroke="#2a9d4e" stroke-width="1.100" fill="#fff" fill-opacity=".6"/><path d="M3.900 6.700l1.900 1.900 3.500-3.600" stroke="#2a9d4e" stroke-width="1.100" fill="none" stroke-linecap="round" stroke-linejoin="round"/></svg>
<div class="t" style="top:533.61px;font-size:12px;line-height:20px;left:567.30px;color:#737373;">Microsoft Word <span class="j" style="font-size:11.16px;letter-spacing:0.84px">文書</span></div>
<div class="t" style="top:533.61px;font-size:12px;line-height:20px;right:362.40px;color:#737373;letter-spacing:-0.45px;">14 KB</div>
<svg class="i" style="left:228.00px;top:567.22px;" width="16.5" height="16" viewBox="0 0 16.5 16">
<rect x="2.900" y="-.200" width="12.200" height="15.300" rx="1.300" fill="#fff" stroke="#bdbdbd" stroke-width=".9"/>
<defs><linearGradient id="wg" x1="0" y1="0" x2="0" y2="1"><stop offset="0" stop-color="#41a5ee"/><stop offset="1" stop-color="#1a5fc0"/></linearGradient></defs>
<rect x="6.200" y="2.600" width="6.800" height="9" fill="url(#wg)"/>
<rect x=".5" y="8.400" width="7.300" height="7" rx="1.100" fill="#1d4fb3"/>
<path d="M2 10.300l1 3.300 1.150-3.300 1.150 3.300 1-3.300" stroke="#fff" stroke-width=".95" fill="none" stroke-linejoin="round"/>
</svg>
<div class="t" style="top:566.42px;font-size:12px;line-height:20px;left:248.60px;color:#1b1b1b;letter-spacing:-0.33px;"><span class="j" style="font-size:11.16px;letter-spacing:0.51px">文書</span>2.docx</div>
<svg class="i" style="left:486.40px;top:569.42px;" width="13" height="13" viewBox="0 0 13 13"><circle cx="6.500" cy="6.500" r="5.800" stroke="#2a9d4e" stroke-width="1.100" fill="#fff" fill-opacity=".6"/><path d="M3.900 6.700l1.900 1.900 3.500-3.600" stroke="#2a9d4e" stroke-width="1.100" fill="none" stroke-linecap="round" stroke-linejoin="round"/></svg>
<div class="t" style="top:566.42px;font-size:12px;line-height:20px;left:567.30px;color:#737373;">Microsoft Word <span class="j" style="font-size:11.16px;letter-spacing:0.84px">文書</span></div>
<div class="t" style="top:566.42px;font-size:12px;line-height:20px;right:362.40px;color:#737373;letter-spacing:-0.45px;">14 KB</div>
<svg class="i" style="left:228.00px;top:600.03px;" width="16.5" height="16" viewBox="0 0 16.5 16">
<rect x="2.900" y="-.200" width="12.200" height="15.300" rx="1.300" fill="#fff" stroke="#bdbdbd" stroke-width=".9"/>
<defs><linearGradient id="wg" x1="0" y1="0" x2="0" y2="1"><stop offset="0" stop-color="#41a5ee"/><stop offset="1" stop-color="#1a5fc0"/></linearGradient></defs>
<rect x="6.200" y="2.600" width="6.800" height="9" fill="url(#wg)"/>
<rect x=".5" y="8.400" width="7.300" height="7" rx="1.100" fill="#1d4fb3"/>
<path d="M2 10.300l1 3.300 1.150-3.300 1.150 3.300 1-3.300" stroke="#fff" stroke-width=".95" fill="none" stroke-linejoin="round"/>
</svg>
<div class="t" style="top:599.23px;font-size:12px;line-height:20px;left:248.60px;color:#1b1b1b;letter-spacing:-0.33px;"><span class="j" style="font-size:11.16px;letter-spacing:0.51px">文書</span>3.docx</div>
<svg class="i" style="left:486.40px;top:602.23px;" width="13" height="13" viewBox="0 0 13 13"><circle cx="6.500" cy="6.500" r="5.800" stroke="#2a9d4e" stroke-width="1.100" fill="#fff" fill-opacity=".6"/><path d="M3.900 6.700l1.900 1.900 3.500-3.600" stroke="#2a9d4e" stroke-width="1.100" fill="none" stroke-linecap="round" stroke-linejoin="round"/></svg>
<div class="t" style="top:599.23px;font-size:12px;line-height:20px;left:567.30px;color:#737373;">Microsoft Word <span class="j" style="font-size:11.16px;letter-spacing:0.84px">文書</span></div>
<div class="t" style="top:599.23px;font-size:12px;line-height:20px;right:362.40px;color:#737373;letter-spacing:-0.45px;">14 KB</div>
<svg class="i" style="left:228.00px;top:632.84px;" width="16.5" height="16" viewBox="0 0 16.5 16">
<rect x="2.400" y=".900" width="14" height="12.200" rx="1.300" fill="#fff" stroke="#bdbdbd" stroke-width=".9"/>
<rect x="6" y="3" width="6.200" height="8.300" fill="#1e9b47"/><rect x="6" y="3" width="6.200" height="2.600" fill="#37b45c"/><rect x="9.100" y="3" width="3.100" height="8.300" fill="#12833a" opacity=".55"/>
<rect x=".6" y="7.700" width="7.300" height="7" rx="1.100" fill="#127a3c"/>
<path d="M2.700 9.400l3.100 3.700M5.800 9.400l-3.100 3.700" stroke="#fff" stroke-width="1.100"/>
</svg>
<div class="t" style="top:632.04px;font-size:12px;line-height:20px;left:248.60px;color:#1b1b1b;letter-spacing:-0.33px;"><span class="j" style="font-size:11.16px;letter-spacing:0.51px">旅行</span><span class="k" style="width:26.08px"><span style="transform:scale(0.745,1.04)">プラン</span></span><span class="j" style="font-size:11.16px;letter-spacing:0.51px">一覧</span>.xlsx</div>
<svg class="i" style="left:486.40px;top:635.04px;" width="13" height="13" viewBox="0 0 13 13"><circle cx="6.500" cy="6.500" r="5.800" stroke="#2a9d4e" stroke-width="1.100" fill="#fff" fill-opacity=".6"/><path d="M3.900 6.700l1.900 1.900 3.500-3.600" stroke="#2a9d4e" stroke-width="1.100" fill="none" stroke-linecap="round" stroke-linejoin="round"/></svg>
<div class="t" style="top:632.04px;font-size:12px;line-height:20px;left:567.30px;color:#737373;letter-spacing:-0.15px;">Microsoft Excel <span class="k" style="width:53.32px"><span style="transform:scale(0.750,1.04)">ワークシート</span></span></div>
<div class="t" style="top:632.04px;font-size:12px;line-height:20px;right:362.40px;color:#737373;letter-spacing:-0.45px;">19 KB</div>
<div id="status"></div>
<div class="t" style="top:654.50px;font-size:12px;line-height:16px;left:15.00px;color:#1b1b1b;letter-spacing:-0.25px;">15 <span class="j" style="font-size:11.16px;letter-spacing:0.59px">個</span><span class="k" style="width:9.40px"><span style="transform:scale(0.800,1.04)">の</span></span><span class="j" style="font-size:11.16px;letter-spacing:0.59px">項目</span></div>
<div class="t" style="top:654.50px;font-size:12px;line-height:16px;left:95.50px;color:#1b1b1b;">1 <span class="j" style="font-size:11.16px;letter-spacing:0.84px">個</span><span class="k" style="width:9.60px"><span style="transform:scale(0.800,1.04)">の</span></span><span class="j" style="font-size:11.16px;letter-spacing:0.84px">項目</span><span class="k" style="width:9.60px"><span style="transform:scale(0.800,1.04)">を</span></span><span class="j" style="font-size:11.16px;letter-spacing:0.84px">選択</span>  8.11 KB</div>
<div class="t" style="top:654.50px;font-size:12px;line-height:16px;left:248.00px;color:#1b1b1b;"><span class="k" style="width:63.84px"><span style="transform:scale(0.760,1.04)">このデバイスで</span></span><span class="j" style="font-size:11.16px;letter-spacing:0.84px">使用可能</span></div>
<div class="b" style="left:84px;top:654px;width:1px;height:15px;background:#f3f3f3"></div>
<div class="b" style="left:238px;top:654px;width:1px;height:15px;background:#f3f3f3"></div>
<div class="b" style="left:371px;top:654px;width:1px;height:15px;background:#f3f3f3"></div>
<div class="b" style="left:1186px;top:649px;width:25px;height:25px;background:#e4f0fa;border:1px solid #7fb2e0"></div>
<svg class="i" style="left:1194.00px;top:656.50px;" width="11" height="10.5" viewBox="0 0 11 10.5"><path d="M0 .600h10.800M0 3.700h10.800M0 6.800h10.800M0 9.900h10.800" stroke="#5f5f5f" stroke-width="1" fill="none"/></svg>
<svg class="i" style="left:1217.50px;top:655.50px;" width="12" height="11.5" viewBox="0 0 12 11.5"><rect x=".5" y=".5" width="10.600" height="8" fill="#fff" stroke="#6a6a6a" stroke-width="1"/><path d="M.5 10.400h10.600" stroke="#8a8a8a" stroke-width="1"/></svg>
</div>
</body>
</html>
